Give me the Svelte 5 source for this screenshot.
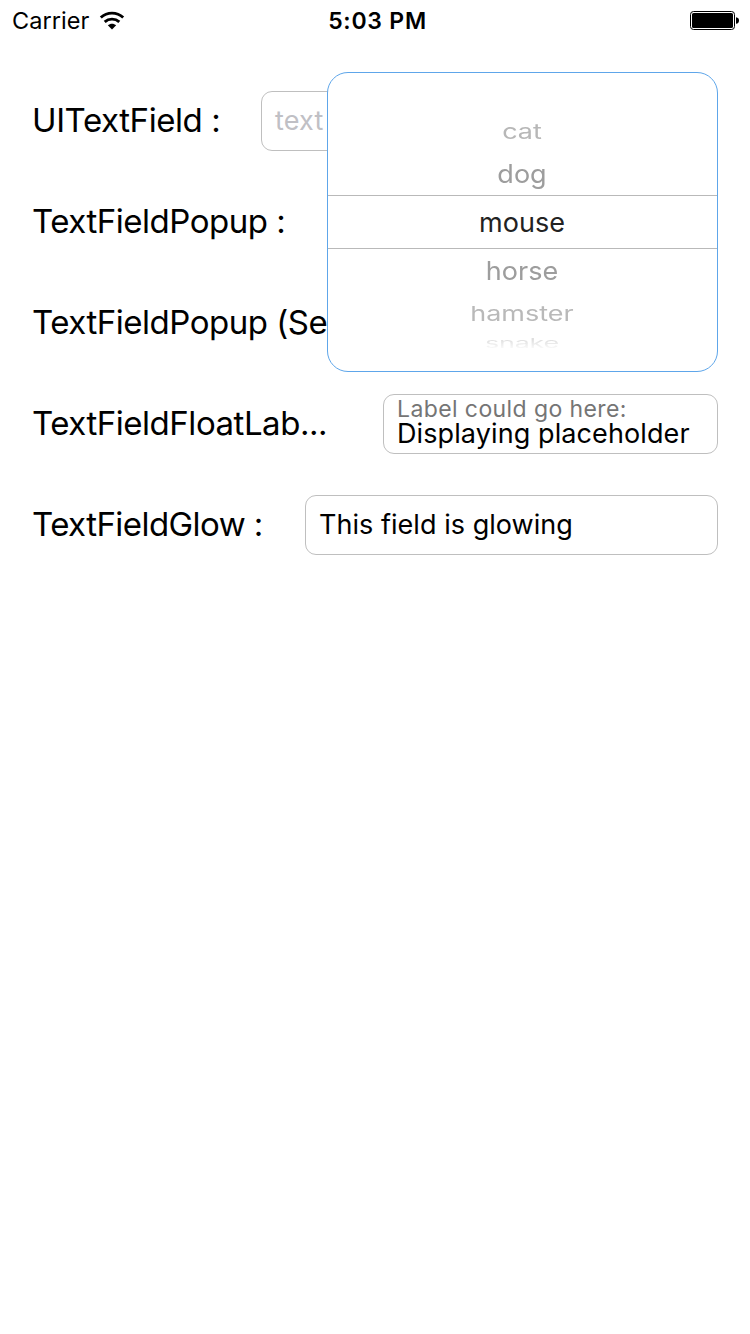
<script>
  const animals = [
    { name: 'cat', kind: 'far-up' },
    { name: 'dog', kind: 'near-up' },
    { name: 'mouse', kind: 'selected' },
    { name: 'horse', kind: 'near-down' },
    { name: 'hamster', kind: 'far-down' },
    { name: 'snake', kind: 'edge' }
  ];
</script>

<div class="screen">
  <header class="status">
    <div class="carrier">
      <span class="carrier-name">Carrier</span>
      <svg class="wifi" width="26" height="19" viewBox="0 0 26 19">
        <path d="M1.8 6.5C8.2 .7 17.8 .7 24.2 6.5" fill="none" stroke="#000" stroke-width="2.9" />
        <path d="M5.7 10.9C9.9 7.2 16.1 7.2 20.3 10.9" fill="none" stroke="#000" stroke-width="2.9" />
        <path d="M8.8 14.2C11.3 12.1 14.7 12.1 17.2 14.2L13 18.5Z" fill="#000" />
      </svg>
    </div>
    <span class="time">5:03 PM</span>
    <svg class="battery" width="49" height="20" viewBox="0 0 49 20">
      <rect x=".5" y=".5" width="44" height="18" rx="3" fill="#fff" stroke="#000" />
      <rect x="2" y="2" width="41" height="15" rx="1.6" fill="#000" />
      <path d="M46 6.2C48.2 6.5 49 7.8 49 9.5S48.2 12.5 46 12.8Z" fill="#000" />
    </svg>
  </header>

  <main class="form">
    <div class="row">
      <span class="label l1">UITextField :</span>
      <div class="field plain"><span class="placeholder">text</span></div>
    </div>
    <div class="row"><span class="label l2">TextFieldPopup :</span></div>
    <div class="row"><span class="label l3">TextFieldPopup (Se</span></div>
    <div class="row">
      <span class="label l4">TextFieldFloatLab...</span>
      <div class="field float">
        <span class="caption">Label could go here:</span>
        <span class="value">Displaying placeholder</span>
      </div>
    </div>
    <div class="row">
      <span class="label l5">TextFieldGlow :</span>
      <div class="field glow"><span class="value">This field is glowing</span></div>
    </div>
  </main>

  <div class="picker">
    {#each animals as animal}
      <div class="option {animal.kind}"><span>{animal.name}</span></div>
    {/each}
  </div>
</div>

<style>
  :global(body) { background: #fff; }
  .screen {
    position: relative;
    box-sizing: border-box;
    width: 750px;
    height: 1334px;
    overflow: hidden;
    background: #fff;
    color: #000;
    font-family: Inter, "Liberation Sans", sans-serif;
    white-space: nowrap;
  }
  svg { display: block; }
  .status {
    display: grid;
    grid-template-columns: 1fr auto 1fr;
    align-items: center;
    height: 40px;
    padding: 0 11px 0 12px;
    font-size: 24px;
    line-height: 38px;
  }
  .carrier { display: flex; align-items: center; gap: 10px; }
  .carrier-name { font-size: 23.5px; padding-top: 2px; letter-spacing: 0.05px; }
  .time {
    padding: 2px 0 0 4px;
    font-size: 23px;
    font-weight: 600;
    letter-spacing: 0.75px;
  }
  .battery { justify-self: end; margin-top: 1px; }
  .form {
    display: flex;
    flex-direction: column;
    gap: 41px;
    padding: 51px 32px 0 32px;
  }
  .row {
    display: flex;
    align-items: center;
    justify-content: space-between;
    height: 60px;
  }
  .label { font-size: 33px; line-height: 58px; padding-bottom: 2px; }
  .l1 { letter-spacing: -0.42px; }
  .l2, .l3 { letter-spacing: -0.48px; }
  .l4 { letter-spacing: -0.47px; }
  .l5 { letter-spacing: -0.56px; }
  .field {
    box-sizing: border-box;
    display: flex;
    flex-direction: column;
    justify-content: center;
    align-items: flex-start;
    height: 60px;
    padding-left: 13px;
    padding-bottom: 2px;
    border: 1px solid #bfbfbf;
    border-radius: 11px;
    font-size: 27px;
    letter-spacing: 0.04px;
  }
  .plain { width: 457px; }
  .float { width: 335px; padding-bottom: 6px; letter-spacing: 0.1px; }
  .glow { width: 413px; }
  .placeholder { color: #c0c0c5; letter-spacing: 0.2px; }
  .caption { color: #757575; font-size: 23px; line-height: 26px; letter-spacing: 0.4px; }
  .float .value { line-height: 24px; }
  .picker {
    position: absolute;
    left: 327px;
    top: 72px;
    box-sizing: border-box;
    display: flex;
    flex-direction: column;
    width: 391px;
    height: 300px;
    padding-top: 36px;
    border: 1px solid #5ea6ea;
    border-radius: 21px;
    background: #fff;
    font-size: 27px;
  }
  .option {
    box-sizing: border-box;
    display: flex;
    flex: none;
    align-items: center;
    justify-content: center;
    padding-right: 1px;
  }
  .option span { line-height: 32px; }
  .far-up { height: 44px; padding-top: 2px; color: #b7b7b7; }
  .far-up span { transform: scaleY(0.76); }
  .near-up { height: 42px; color: #9d9d9d; }
  .near-up span { transform: scaleY(0.95); }
  .selected {
    height: 54px;
    padding-top: 2px;
    border-top: 1px solid #b9b9b9;
    border-bottom: 1px solid #b9b9b9;
    color: #222;
  }
  .near-down { height: 44px; color: #9d9d9d; }
  .near-down span { transform: scaleY(0.95); }
  .far-down { height: 40px; padding-top: 1px; color: #b9b9b9; }
  .far-down span { transform: scaleY(0.76); }
  .edge { height: 20px; padding-top: 2px; }
  .edge span {
    transform: scaleY(0.48);
    letter-spacing: -0.3px;
    color: transparent;
    background: linear-gradient(#dedede 20%, #fcfcfc 85%);
    background-clip: text;
  }
</style>
